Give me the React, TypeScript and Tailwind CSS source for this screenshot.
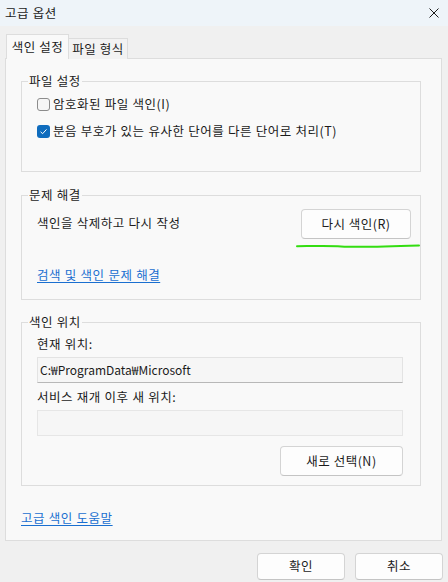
import { useState } from "react";

// 고급 옵션 대화 상자 (색인 설정 탭)

const font = "font-['Noto_Sans_CJK_KR',sans-serif]";

function CheckBox({ checked }: { checked: boolean }) {
  if (checked) {
    return (
      <span className="w-[13px] h-[13px] rounded-[3px] bg-[#0f6cbd] flex items-center justify-center shrink-0">
        <svg width="9" height="9" viewBox="0 0 9 9">
          <path d="M1.6 4.8 L3.6 6.7 L7.5 2.4" fill="none" stroke="#ffffff" strokeWidth="1" />
        </svg>
      </span>
    );
  }
  return (
    <span className="w-[13px] h-[13px] rounded-[3px] border border-[#8c8c8c] bg-[#f6f6f6] shrink-0" />
  );
}

function Group({
  title,
  className,
  children,
}: {
  title: string;
  className: string;
  children: React.ReactNode;
}) {
  return (
    <div className={`relative border border-[#dddddd] pl-[15px] ${className}`}>
      {/* 그룹 제목 (테두리 위에 겹침) */}
      <span className="absolute -top-[9px] left-[6px] px-px bg-[#f9f9f9] leading-[16px]">
        {title}
      </span>
      {children}
    </div>
  );
}

function Button({
  label,
  className,
}: {
  label: string;
  className: string;
}) {
  return (
    <button
      type="button"
      className={`flex items-center justify-center rounded-[4px] bg-[#fdfdfd] border border-[#d4d4d4] border-b-[#c4c4c4] text-[#1b1b1b] ${className}`}
    >
      {label}
    </button>
  );
}

export default function App() {
  const [tab, setTab] = useState(0);

  return (
    <div
      className={`w-[448px] h-[582px] bg-[#f0f0f0] text-[12.5px] tracking-[0.5px] text-[#1b1b1b] [word-spacing:0.5px] flex flex-col ${font}`}
    >
      {/* 제목 표시줄 */}
      <div className="h-[26px] bg-[#eef4f9] flex items-center justify-between pl-[5px] pr-[9px]">
        <span className="leading-[16px]">고급 옵션</span>
        <svg width="10" height="10" viewBox="0 0 10 10">
          <path d="M0.5 0.5 L9.5 9.5 M9.5 0.5 L0.5 9.5" stroke="#1b1b1b" strokeWidth="1" />
        </svg>
      </div>

      {/* 탭 */}
      <div className="flex items-end pt-[8px] pl-[6px] h-[32px]">
        <button
          type="button"
          onClick={() => setTab(0)}
          className={`relative z-10 -mb-px w-[63px] flex items-start justify-center border border-b-0 border-[#dddddd] ${
            tab === 0 ? "h-[25px] bg-[#f9f9f9] pt-[4px]" : "h-[21px] bg-[#f2f2f2] pt-[2px]"
          }`}
        >
          <span className="leading-[16px]">색인 설정</span>
        </button>
        <button
          type="button"
          onClick={() => setTab(1)}
          className={`relative -mb-px w-[59px] flex items-start justify-center border border-l-0 border-b-0 border-[#dddddd] ${
            tab === 1 ? "z-10 h-[25px] bg-[#f9f9f9] pt-[4px]" : "h-[21px] bg-[#f2f2f2] pt-[2px]"
          }`}
        >
          <span className="leading-[16px]">파일 형식</span>
        </button>
      </div>

      {/* 탭 패널 */}
      <div className="ml-[5px] w-[437px] h-[483px] border border-[#dddddd] bg-[#f9f9f9] pt-[22px] pl-[15px] flex flex-col">
        <Group title="파일 설정" className="w-[400px] h-[91px] pt-[12px]">
          <div className="flex flex-col gap-[7px]">
            <label className="h-[20px] flex items-center gap-[3px]">
              <CheckBox checked={false} />
              <span className="leading-[16px]">암호화된 파일 색인(I)</span>
            </label>
            <label className="h-[20px] flex items-center gap-[3px]">
              <CheckBox checked />
              <span className="leading-[16px]">분음 부호가 있는 유사한 단어를 다른 단어로 처리(T)</span>
            </label>
          </div>
        </Group>

        <Group title="문제 해결" className="mt-[23px] w-[400px] h-[105px] pt-[13px]">
          <div className="flex items-center justify-between pr-[9px]">
            <span className="leading-[16px] mb-[3px]">색인을 삭제하고 다시 작성</span>
            <Button label="다시 색인(R)" className="w-[110px] h-[30px]" />
          </div>
          <div className="flex justify-end -ml-[15px] pr-0">
            <svg width="124" height="6" viewBox="0 0 124 6" className="mt-[4px]">
              <path
                d="M1 3.2 C20 3 35 2.6 45 3.4 C60 4.4 90 3.6 123 2.4"
                fill="none"
                stroke="#33dd11"
                strokeWidth="2"
                strokeLinecap="round"
              />
            </svg>
          </div>
          <a className="inline-block mt-[18px] leading-[16px] text-[#1a6fd0] underline underline-offset-[2px] cursor-pointer">
            검색 및 색인 문제 해결
          </a>
        </Group>

        <Group title="색인 위치" className="mt-[22px] w-[400px] h-[164px] pt-[13px]">
          <div className="leading-[16px]">현재 위치:</div>
          <div className="mt-[5px] w-[366px] h-[26px] bg-[#f6f6f6] border border-[#e3e3e3] border-b-[#b8b8b8] flex items-center pl-[2px] text-[12px] tracking-normal [word-spacing:0px]">
            C:₩ProgramData₩Microsoft
          </div>
          <div className="mt-[6px] leading-[16px]">서비스 재개 이후 새 위치:</div>
          <div className="mt-[5px] w-[366px] h-[26px] bg-[#f6f6f6] border border-[#e6e6e6]" />
          <div className="mt-[10px] w-[366px] flex justify-end">
            <Button label="새로 선택(N)" className="w-[123px] h-[30px]" />
          </div>
        </Group>

        <a className="mt-[24px] self-start leading-[16px] text-[#1a6fd0] underline underline-offset-[2px] cursor-pointer">
          고급 색인 도움말
        </a>
      </div>

      {/* 확인 / 취소 */}
      <div className="mt-[12px] flex justify-end gap-[10px] pr-[5px]">
        <Button label="확인" className="w-[88px] h-[27px] border-[#0067c0] border-b-[#0067c0]" />
        <Button label="취소" className="w-[88px] h-[27px]" />
      </div>
    </div>
  );
}
